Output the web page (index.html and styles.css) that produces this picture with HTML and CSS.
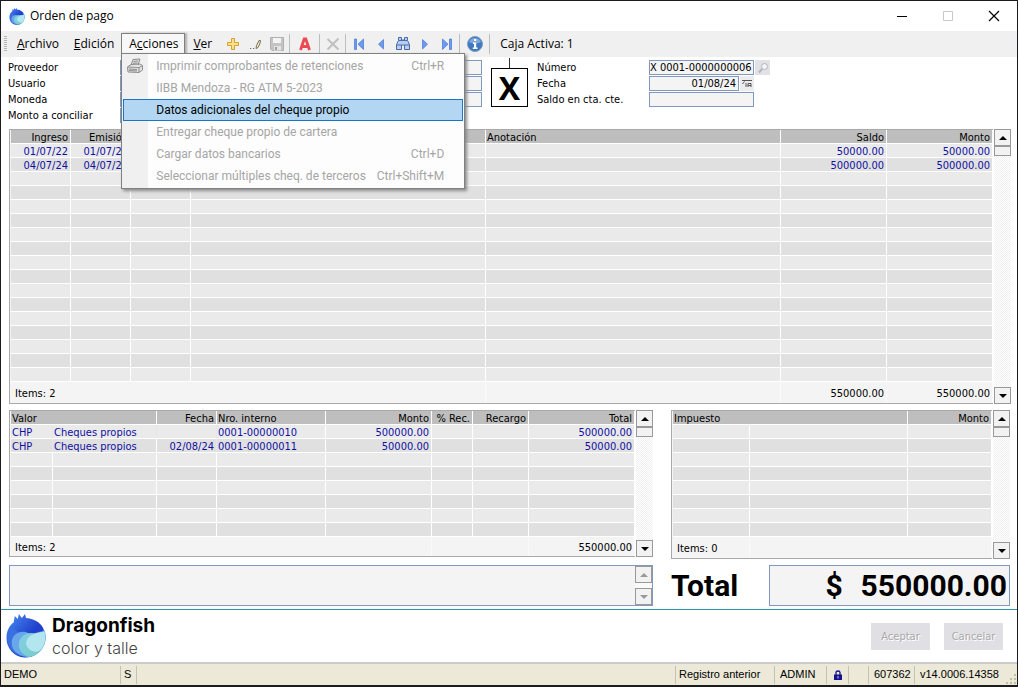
FILE: index.html
```html
<!DOCTYPE html>
<html lang="es">
<head>
<meta charset="utf-8">
<title>Orden de pago</title>
<link rel="stylesheet" href="styles.css">
</head>
<body>
<svg class="defs" aria-hidden="true">
  <defs>
    <linearGradient id="deep" x1="0" y1="0" x2="1" y2="1"><stop offset="0" stop-color="#4a90f4"/><stop offset=".55" stop-color="#2040cc"/><stop offset="1" stop-color="#2a3fd0"/></linearGradient>
    <linearGradient id="aqua" x1="0" y1="0" x2="1" y2="1"><stop offset="0" stop-color="#86cdea"/><stop offset="1" stop-color="#74cfc2"/></linearGradient>
    <symbol id="dragon" viewBox="0 0 38 43">
      <path d="M7 8 8 2 11 5 12 0 15 4 18 0 19 4C29 5 35 10 37 17L37 25A18.500 18.500 0 1 1 0 23C0 16 3 11 7 8Z" fill="url(#deep)"/>
      <path d="M1 20C2 14 6 12 8 15C12 21 24 21 36 16A19 19 0 0 1 22 42C8 43-1 33 1 20Z" fill="#3a70e0"/>
      <path d="M5 28C5 19 15 15 22 19C30 20 34 18 37 16A19 19 0 0 1 20 42C11 40 5 36 5 28Z" fill="#67a7ea"/>
      <path d="M12 30C12 21 21 17 28 19L37 17A19 19 0 0 1 22 42C16 40 12 36 12 30Z" fill="url(#aqua)"/>
      <path d="M19 28C20 20 30 18 37 17C39 27 36 34 30 37C24 37 19 33 19 28Z" fill="#b4e6f0"/>
    </symbol>
  </defs>
</svg>
<div class="window">
  <header class="titlebar">
    <svg class="app-icon"><use href="#dragon"/></svg>
    <h1 class="title">Orden de pago</h1>
    <button class="win-btn" aria-label="Minimizar"><svg width="12" height="12"><path d="M1 6.500H11" stroke="#000"/></svg></button>
    <button class="win-btn" aria-label="Maximizar" disabled><svg width="12" height="12"><path d="M1.500 1.500h9v9h-9z" fill="none" stroke="#c8c8c8"/></svg></button>
    <button class="win-btn" aria-label="Cerrar"><svg width="12" height="12"><path d="M1 1 11 11M11 1 1 11" stroke="#000" stroke-width="1.200"/></svg></button>
  </header>

  <nav class="toolbar">
    <span class="grip"></span>
    <button class="menu-btn"><u>A</u>rchivo</button>
    <button class="menu-btn"><u>E</u>dición</button>
    <div class="menu-anchor">
      <button class="menu-btn open">A<u>c</u>ciones</button>
      <div class="menu" role="menu">
        <button class="menu-item" disabled>
          <svg class="menu-icon" viewBox="0 0 18 16" width="18" height="16"><path d="M5 7 7 1.500 14 1 12 7M7.500 3.500 12 3M7 5.300 11.500 5M1.500 9 5 6.500 14 6 16.500 7.500V12L13 14.500 2 14Z M1.500 9 13 9.500 16.500 7.500M13 9.500V14M3 11 11 11.500M3 12.500 11 13" fill="#e2e2e2" stroke="#8d8d8d"/></svg>
          <span class="menu-text">Imprimir comprobantes de retenciones</span><kbd>Ctrl+R</kbd></button>
        <button class="menu-item" disabled><span class="menu-text">IIBB Mendoza - RG ATM 5-2023</span></button>
        <button class="menu-item selected"><span class="menu-text">Datos adicionales del cheque propio</span></button>
        <button class="menu-item" disabled><span class="menu-text">Entregar cheque propio de cartera</span></button>
        <button class="menu-item" disabled><span class="menu-text">Cargar datos bancarios</span><kbd>Ctrl+D</kbd></button>
        <button class="menu-item" disabled><span class="menu-text">Seleccionar múltiples cheq. de terceros</span><kbd>Ctrl+Shift+M</kbd></button>
      </div>
    </div>
    <button class="menu-btn ver"><u>V</u>er</button>
    <button class="tool" aria-label="Nuevo"><svg viewBox="0 0 16 16"><path d="M6.500 2.500h3v4h4v3h-4v4h-3v-4h-4v-3h4z" fill="#fbe08a" stroke="#d6a12c"/></svg></button>
    <button class="tool" aria-label="Modificar"><svg viewBox="0 0 16 16"><path d="M3 12.500h1.300M6 12.500h1.300" stroke="#77735a"/><path d="M9 12.500 9.500 9.500 12 4.500 13.500 4.500 13 7.500 11 11.500Z" fill="#efe7bd" stroke="#77735a"/></svg></button>
    <button class="tool" aria-label="Guardar" disabled><svg viewBox="0 0 16 16"><path d="M1.500 1.500h13v13H3L1.500 13Z" fill="#c4c4c4" stroke="#b0b0b0"/><path d="M4 2h8v5H4z" fill="#f4f4f4"/><path d="M5 10h7v4.500H5z" fill="#e4e4e4"/><path d="M6 11h2v3H6z" fill="#a0a0a0"/></svg></button>
    <span class="sep"></span>
    <button class="tool tool-wide" aria-label="Anular"><svg viewBox="0 0 16 16"><path d="M3.500 14 7.200 3H8.800L12.500 14M5 10.500H11" fill="none" stroke="#ee4850" stroke-width="2.800"/></svg></button>
    <span class="sep"></span>
    <button class="tool" aria-label="Eliminar" disabled><svg viewBox="0 0 16 16"><path d="M2.500 3 13.500 13.500M13.500 2.500 2.500 13.500" stroke="#c0c0c0" stroke-width="2"/></svg></button>
    <span class="sep"></span>
    <button class="tool" aria-label="Primero"><svg viewBox="0 0 16 16"><path d="M3.500 3v10.500h2V3zM12.500 3 7 8.200l5.500 5.300z" fill="#6a9cf0" stroke="#4672d4" stroke-width=".7"/></svg></button>
    <button class="tool" aria-label="Anterior"><svg viewBox="0 0 16 16"><path d="M10.500 3.500 5.500 8.200l5 4.800z" fill="#6a9cf0" stroke="#4672d4" stroke-width=".7"/></svg></button>
    <button class="tool" aria-label="Buscar"><svg viewBox="0 0 16 16"><path d="M3.500 1.500h3v2.500h3V1.500h3v3l2 4v5h-5V9h-3v4.500h-5v-5l2-4zM1.500 9h5M9.500 9h5M4 4.500h8" fill="#b9cfee" stroke="#486aac"/></svg></button>
    <button class="tool" aria-label="Siguiente"><svg viewBox="0 0 16 16"><path d="M5.500 3.500 10.500 8.200l-5 4.800z" fill="#6a9cf0" stroke="#4672d4" stroke-width=".7"/></svg></button>
    <button class="tool" aria-label="Último"><svg viewBox="0 0 16 16"><path d="M10.500 3v10.500h2V3zM3.500 3 9 8.200l-5.500 5.300z" fill="#6a9cf0" stroke="#4672d4" stroke-width=".7"/></svg></button>
    <span class="sep"></span>
    <button class="tool tool-wide" aria-label="Información"><svg viewBox="0 0 16 16"><circle cx="8" cy="8" r="7.500" fill="#3f78c0" stroke="#7d9cc4"/><path d="M2 6A6.500 6.500 0 0 1 14 6Q8 9 2 6Z" fill="#7fa9dc"/><path d="M7 3h2.200v2H7zM6 6.500h3.200v5h1.300V13H5.800v-1.500H7V8H6z" fill="#fff"/></svg></button>
    <span class="sep"></span>
    <span class="caja">Caja Activa: 1</span>
  </nav>

  <main class="content">
    <form class="form">
      <div class="fields">
        <label for="prov">Proveedor</label><input id="prov" readonly>
        <label for="usr">Usuario</label><input id="usr" readonly>
        <label for="mon">Moneda</label><input id="mon" readonly>
        <label for="conc">Monto a conciliar</label><input id="conc" class="short" readonly>
      </div>
      <div class="letter"><span class="stem"></span><span class="letter-box">X</span></div>
      <div class="fields doc">
        <label for="num">Número</label><span class="row"><input id="num" value="X 0001-0000000006" readonly><button type="button" class="mini" aria-label="Buscar comprobante"><svg viewBox="0 0 12 12"><circle cx="7.500" cy="4.500" r="3" fill="#f4f4f8" stroke="#b3b3bc"/><path d="M5 7 2 10.500" stroke="#b3b3bc" stroke-width="2"/></svg></button></span>
        <label for="fec">Fecha</label><span class="row"><input id="fec" class="right" value="01/08/24" readonly><button type="button" class="mini date" aria-label="Calendario"><svg viewBox="0 0 12 12"><path d="M1 2.500h10M3.500 3.500 1.500 6M5 5v4M7 9V5.500h3V9M7 7.500h3" fill="none" stroke="#555"/></svg></button></span>
        <label for="sal">Saldo en cta. cte.</label><input id="sal" readonly>
      </div>
    </form>

    <section class="grid">
      <div class="table-wrap">
      <table>
        <colgroup><col class="w60"><col class="w60"><col class="w60"><col><col><col class="w106"><col class="w106"></colgroup>
        <thead><tr><th class="r">Ingreso</th><th class="r">Emisión</th><th></th><th></th><th>Anotación</th><th class="r">Saldo</th><th class="r">Monto</th></tr></thead>
        <tbody>
          <tr><td class="r">01/07/22</td><td class="r">01/07/22</td><td></td><td></td><td></td><td class="r">50000.00</td><td class="r">50000.00</td></tr>
          <tr><td class="r">04/07/24</td><td class="r">04/07/24</td><td></td><td></td><td></td><td class="r">500000.00</td><td class="r">500000.00</td></tr>
          <tr><td><td><td><td><td><td><td></tr>
          <tr><td><td><td><td><td><td><td></tr>
          <tr><td><td><td><td><td><td><td></tr>
          <tr><td><td><td><td><td><td><td></tr>
          <tr><td><td><td><td><td><td><td></tr>
          <tr><td><td><td><td><td><td><td></tr>
          <tr><td><td><td><td><td><td><td></tr>
          <tr><td><td><td><td><td><td><td></tr>
          <tr><td><td><td><td><td><td><td></tr>
          <tr><td><td><td><td><td><td><td></tr>
          <tr><td><td><td><td><td><td><td></tr>
          <tr><td><td><td><td><td><td><td></tr>
          <tr><td><td><td><td><td><td><td></tr>
          <tr><td><td><td><td><td><td><td></tr>
          <tr><td><td><td><td><td><td><td></tr>
        </tbody>
        <tfoot><tr class="tall"><td class="items" colspan="4">Items: 2</td><td></td><td class="r">550000.00</td><td class="r">550000.00</td></tr></tfoot>
      </table>
      </div>
      <div class="scroll"><button class="arrow up" aria-label="Subir"></button><span class="thumb"></span><button class="arrow down" aria-label="Bajar"></button></div>
    </section>

    <div class="lower">
      <section class="grid">
        <div class="table-wrap">
        <table>
          <colgroup><col class="w42"><col><col class="w60"><col class="w109"><col class="w106"><col class="w41"><col class="w56"><col class="w106"></colgroup>
          <thead><tr><th colspan="2">Valor</th><th class="r">Fecha</th><th>Nro. interno</th><th class="r">Monto</th><th class="r">% Rec.</th><th class="r">Recargo</th><th class="r">Total</th></tr></thead>
          <tbody>
            <tr><td class="open-cell">CHP</td><td class="open-cell">Cheques propios</td><td class="open-cell"></td><td>0001-00000010</td><td class="r">500000.00</td><td></td><td></td><td class="r">500000.00</td></tr>
            <tr><td class="open-cell">CHP</td><td>Cheques propios</td><td class="r open-cell">02/08/24</td><td>0001-00000011</td><td class="r">50000.00</td><td></td><td></td><td class="r">50000.00</td></tr>
            <tr><td><td><td><td><td><td><td><td></tr>
            <tr><td><td><td><td><td><td><td><td></tr>
            <tr><td><td><td><td><td><td><td><td></tr>
            <tr><td><td><td><td><td><td><td><td></tr>
            <tr><td><td><td><td><td><td><td><td></tr>
            <tr><td><td><td><td><td><td><td><td></tr>
          </tbody>
          <tfoot><tr><td class="items" colspan="5">Items: 2</td><td colspan="2"></td><td class="r">550000.00</td></tr></tfoot>
        </table>
        </div>
        <div class="scroll"><button class="arrow up" aria-label="Subir"></button><span class="thumb"></span><button class="arrow down" aria-label="Bajar"></button></div>
      </section>
      <section class="grid">
        <div class="table-wrap">
        <table>
          <colgroup><col class="w77"><col><col class="w84"></colgroup>
          <thead><tr><th colspan="2">Impuesto</th><th class="r">Monto</th></tr></thead>
          <tbody>
            <tr><td><td><td></tr>
            <tr><td><td><td></tr>
            <tr><td><td><td></tr>
            <tr><td><td><td></tr>
            <tr><td><td><td></tr>
            <tr><td><td><td></tr>
            <tr><td><td><td></tr>
            <tr><td><td><td></tr>
          </tbody>
          <tfoot><tr class="tall"><td class="items">Items: 0</td><td colspan="2"></td></tr></tfoot>
        </table>
        </div>
        <div class="scroll"><button class="arrow up" aria-label="Subir"></button><span class="thumb"></span><button class="arrow down" aria-label="Bajar"></button></div>
      </section>
      <div class="memo">
        <textarea aria-label="Observaciones" readonly></textarea>
        <div class="memo-scroll"><button class="arrow up" aria-label="Subir" disabled></button><button class="arrow down" aria-label="Bajar" disabled></button></div>
      </div>
      <div class="total">
        <label for="total">Total</label>
        <div class="total-box"><span>$</span><output id="total">550000.00</output></div>
      </div>
    </div>
  </main>

  <footer class="brandbar">
    <svg class="logo"><use href="#dragon"/></svg>
    <div class="brand"><strong>Dragonfish</strong><span>color y talle</span></div>
    <button class="action" disabled>Aceptar</button>
    <button class="action" disabled>Cancelar</button>
  </footer>
  <div class="status">
    <span class="st demo">DEMO</span>
    <span class="st s">S</span>
    <span class="st fill"></span>
    <span class="st reg">Registro anterior</span>
    <span class="st adm">ADMIN</span>
    <span class="st lock"><svg viewBox="0 0 8 10" width="8" height="10"><path d="M2 5V2.500Q2 1 4 1T6 2.500V5" fill="none" stroke="#14148c" stroke-width="1.300"/><path d="M0 4.500h8V10H0z" fill="#14148c"/><path d="M3.500 6h1v2.500h-1z" fill="#c8c8ff"/></svg></span>
    <span class="st blank"></span>
    <span class="st code">607362</span>
    <span class="st ver-no">v14.0006.14358</span>
    <svg class="size-grip" viewBox="0 0 12 12" width="12" height="12"><path d="M9 1h2v2H9zM5 5h2v2H5zM9 5h2v2H9zM1 9h2v2H1zM5 9h2v2H5zM9 9h2v2H9z" fill="#c2bda4"/></svg>
  </div>
</div>
</body>
</html>
```
FILE: styles.css
```css
* { box-sizing: border-box; }

body {
  margin: 0;
  background: #fff;
  color: #000;
  font: 11px/13px "DejaVu Sans Condensed", "Open Sans", sans-serif;
}

button, input, textarea, kbd { font: inherit; color: inherit; margin: 0; }
button { background: none; border: 0; padding: 0; }
.defs { position: absolute; width: 0; height: 0; }

.window {
  display: flex;
  flex-direction: column;
  min-height: 100vh;
  border: 1px solid #1c1c20;
  border-bottom-width: 2px;
}

/* Title bar */
.titlebar { display: flex; align-items: center; height: 30px; padding-left: 8px; }
.app-icon { width: 16px; height: 17px; }
.title { flex: 1; margin: 0 0 0 5px; font: 12px/16px "Open Sans", sans-serif; }
.win-btn { display: grid; place-items: center; width: 46px; height: 28px; }

/* Toolbar */
.toolbar {
  display: flex;
  align-items: center;
  height: 26px;
  padding-left: 3px;
  background: #f0f0f0;
  font: 12px/16px "Open Sans", sans-serif;
}
.grip { width: 3px; height: 16px; margin-right: 2px; background: repeating-linear-gradient(#b4b4b4 0 1px, #f0f0f0 1px 2px); }
.menu-btn { height: 22px; padding: 0 6px 0 7px; border: 1px solid transparent; }
.menu-anchor { position: relative; }
.menu-btn.open { background: #f8f8f8; border-color: #808080; border-bottom-color: #fbfbfb; box-shadow: 2px 0 2px #b0b0b0; }
.menu-btn.ver { margin-right: 3px; }
.tool { display: grid; place-items: center; width: 22px; height: 22px; }
.tool-wide { width: 26px; }
.tool svg { width: 16px; height: 16px; }
.sep { width: 1px; height: 20px; margin: 0 2px 0 1px; background: #bdbdbd; }
.caja { padding-left: 8px; }

/* Drop-down menu */
.menu {
  position: absolute;
  z-index: 2;
  top: 20px;
  left: 0;
  width: 344px;
  padding: 1px;
  border: 1px solid #808080;
  background: linear-gradient(90deg, #f0f0f0 26px, #fdfdfd 26px);
  box-shadow: 2px 2px 3px #8a8a8a;
  font: 12px/16px Roboto, sans-serif;
}
.menu-item {
  display: flex;
  align-items: center;
  position: relative;
  width: 100%;
  height: 22px;
  padding: 0 18px 0 32px;
  border: 1px solid transparent;
  color: #a5a5a5;
  text-align: left;
}
.menu-item.selected { background: #b3d7f3; border-color: #1a76c4; color: #000; }
.menu-text { flex: 1; white-space: nowrap; }
.menu-icon { position: absolute; left: 2px; }

/* Main area */
.content { flex: 1; display: flex; flex-direction: column; padding: 0 6px 3px 8px; }
.form { display: flex; height: 69px; margin-bottom: 3px; margin-left: -1px; }
.fields {
  display: grid;
  grid-template-columns: 112px 362px;
  grid-auto-rows: 15px;
  gap: 1px 0;
  align-content: start;
  padding-top: 3px;
}
.fields.doc { grid-template-columns: 112px 105px; }
.fields label { line-height: 15px; white-space: nowrap; }
.fields input {
  width: 100%;
  height: 15px;
  min-width: 0;
  padding: 0 1px;
  border: 1px solid #8199bd;
  border-radius: 0;
  background: #f4f4f5;
}
.fields .short { width: 100px; }
.fields .right { width: 90px; padding-right: 2px; text-align: right; }
.row { display: flex; width: 121px; }
.row #num { width: 105px; padding: 0; }
.mini { display: grid; place-items: center; flex: none; width: 15px; height: 15px; margin-left: 1px; background: #e1e1e6; }
.mini.date { width: 14px; background: #ececee; }
.mini svg { width: 12px; height: 12px; }
.letter { display: flex; flex-direction: column; align-items: center; width: 37px; margin: 1px 9px 0; }
.stem { width: 1px; height: 10px; background: #333; }
.letter-box {
  display: grid;
  place-items: center;
  width: 37px;
  height: 39px;
  border: 1px solid #000;
  font: bold 32px/34px "Open Sans", sans-serif;
}

/* Data grids */
.grid { display: flex; align-items: stretch; align-self: start; width: 100%; gap: 1px; }
.table-wrap { flex: 1; min-width: 0; padding-left: 1px; border: 1px solid #a9a9a9; border-right: 0; background: #f4f4f4; }
table { width: 100%; table-layout: fixed; border-spacing: 0; }
th, td {
  height: 14px;
  padding: 2px 1px 0;
  border-right: 1px solid #fff;
  border-bottom: 1px solid #fff;
  line-height: 11px;
  font-weight: normal;
  text-align: left;
  white-space: nowrap;
}
th { background: #bebebe; }
.r { padding-right: 2px; text-align: right; }
tbody td { color: #1010a0; background: #eaeaea; }
tbody tr:nth-child(even) td { background: #e0e0e0; }
tbody .open-cell { border-right-color: #e6e6e6; }
tfoot td { height: 19px; border-bottom: 0; border-right-color: #fafafa; }
tfoot .tall td { height: 21px; }
tfoot .items { padding-left: 4px; }
.w41 { width: 41px; }
.w42 { width: 42px; }
.w56 { width: 56px; }
.w60 { width: 60px; }
.w77 { width: 77px; }
.w84 { width: 84px; }
.w106 { width: 106px; }
.w109 { width: 109px; }

.scroll {
  display: flex;
  flex-direction: column;
  width: 17px;
  background: repeating-conic-gradient(#f0f0f0 0 25%, #fff 0 50%) 0 0 / 2px 2px;
}
.arrow { display: grid; place-items: center; width: 17px; height: 17px; border: 1px solid #999; background: #f2f2f2; }
.arrow::before { content: ""; border: 4px solid transparent; }
.arrow.up::before { border-top: 0; border-bottom-color: #000; }
.arrow.down::before { border-bottom: 0; border-top-color: #000; }
.arrow:disabled.up::before { border-bottom-color: #999; }
.arrow:disabled.down::before { border-top-color: #999; }
.thumb { height: 10px; border: 1px solid #999; background: #f2f2f2; }
.scroll .down { margin-top: auto; }

.lower {
  display: grid;
  grid-template-columns: 644fr 339fr;
  gap: 6px 18px;
  margin-top: 6px;
  padding-right: 1px;
}
.memo { display: flex; height: 41px; border: 1px solid #8199bd; background: #f4f4f4; }
.memo textarea { flex: 1; min-width: 0; border: 0; resize: none; background: none; }
.memo-scroll { display: flex; flex-direction: column; justify-content: space-between; background: #fafafa; }
.total { display: flex; align-items: center; height: 41px; font: bold 30px/39px Roboto, sans-serif; }
.total label { width: 98px; }
.total-box {
  display: flex;
  flex: 1;
  justify-content: flex-end;
  gap: 18px;
  height: 41px;
  padding-right: 2px;
  border: 1px solid #8199bd;
  background: #f4f4f5;
}

/* Brand strip */
.brandbar {
  display: flex;
  align-items: center;
  height: 53px;
  padding: 0 14px 0 5px;
  border-top: 1px solid #2a9aa4;
}
.logo { width: 40px; height: 44px; }
.brand { display: flex; flex: 1; flex-direction: column; padding-left: 6px; font-family: Inter, sans-serif; }
.brand strong { font-size: 19px; line-height: 24px; }
.brand span { font-size: 16px; line-height: 20px; font-weight: 300; color: #444; }
.action {
  width: 59px;
  height: 27px;
  margin-left: 14px;
  background: #e0e0e4;
  color: #a8a8a8;
  text-shadow: 1px 1px #fff;
}

/* Status bar */
.status {
  display: flex;
  align-items: center;
  height: 23px;
  border-top: 2px solid #cbcbcb;
  background: #ece9d8;
  font: 11px/15px "Liberation Sans", Arial, sans-serif;
}
.st { height: 18px; padding: 1px 3px; border-right: 1px solid #c5c2b2; white-space: nowrap; }
.demo { width: 120px; }
.s { width: 16px; }
.fill { flex: 1; }
.reg { width: 99px; }
.adm { width: 52px; padding-left: 5px; }
.lock { display: grid; place-items: center; width: 22px; }
.blank { width: 20px; }
.code { width: 46px; padding-left: 5px; }
.ver-no { width: 90px; padding-left: 5px; border-right: 0; }
.size-grip { align-self: flex-end; }
```
